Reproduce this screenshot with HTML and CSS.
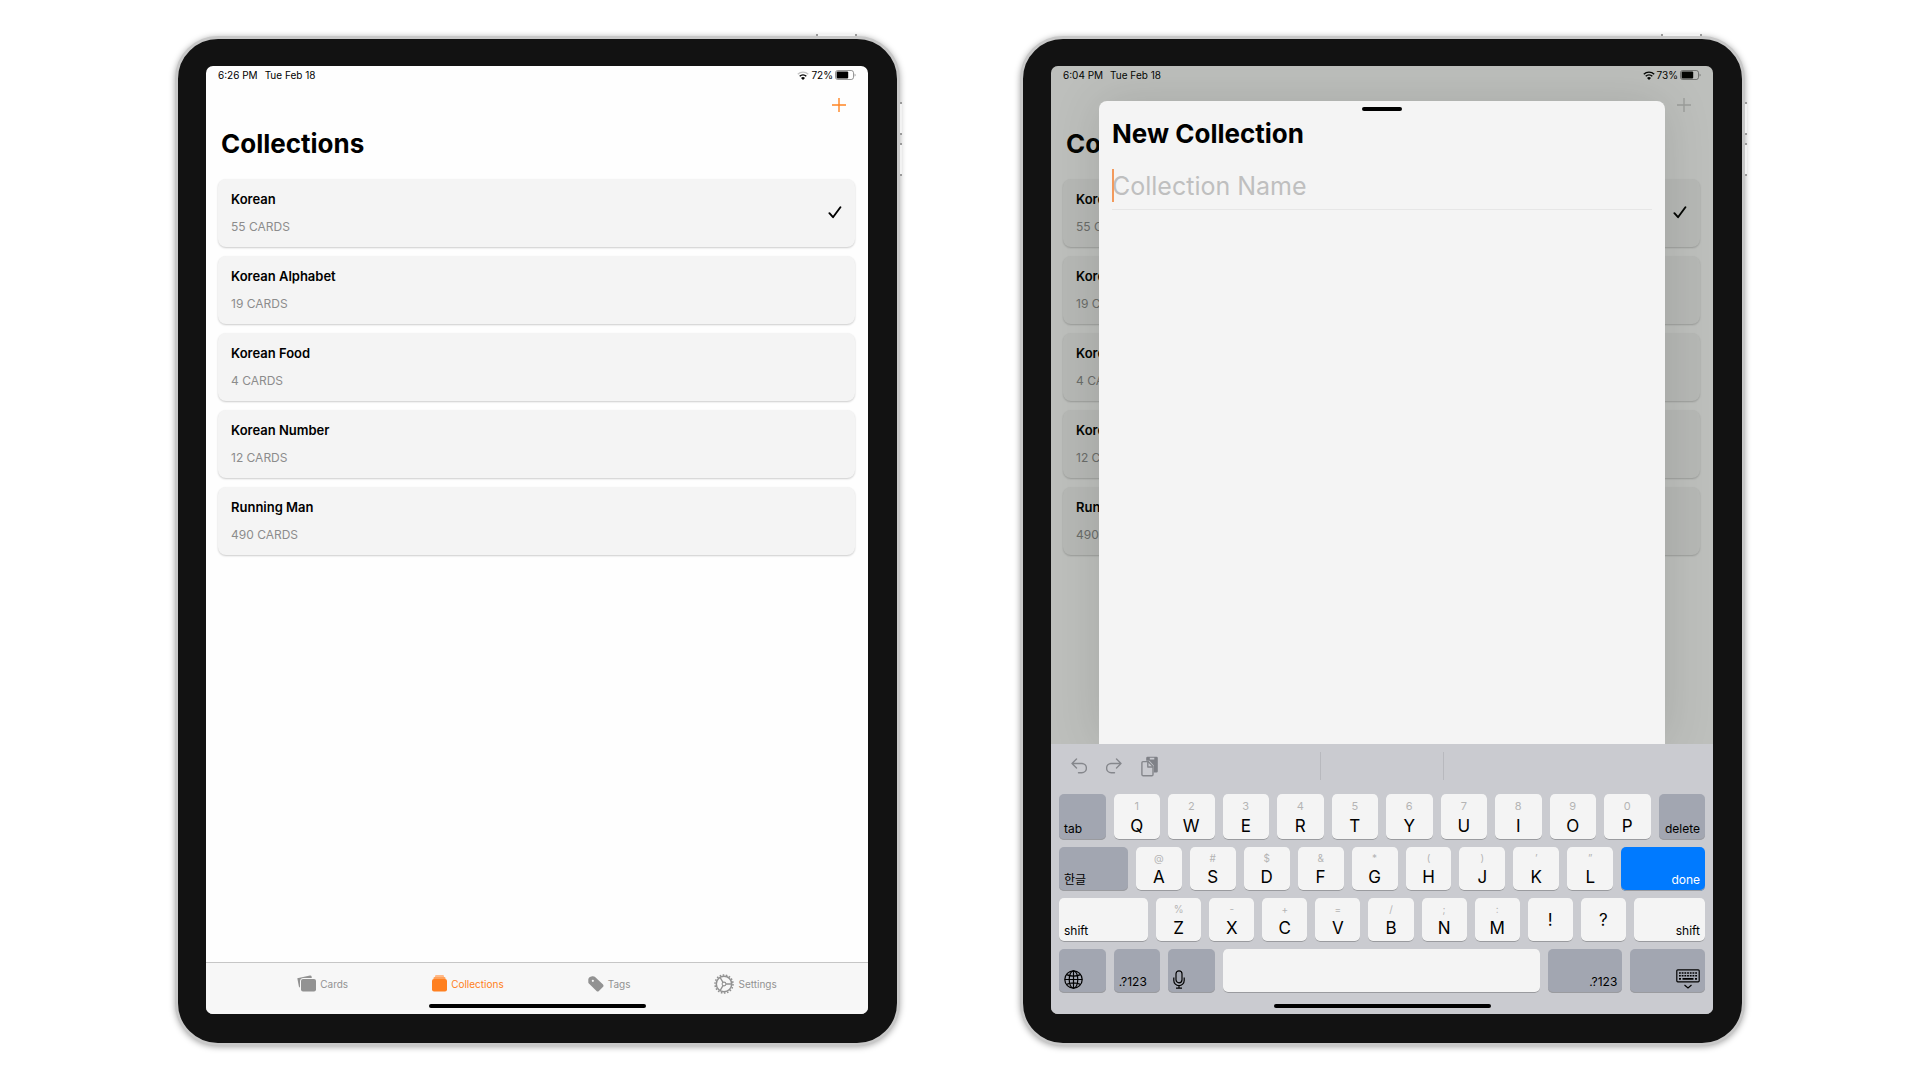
FILE: index.html
```html
<!DOCTYPE html>
<html lang="en">
<head>
<meta charset="utf-8">
<meta name="viewport" content="width=device-width, initial-scale=1">
<title>Collections</title>
<link rel="stylesheet" href="styles.css">
</head>
<body>
<svg class="sprite" aria-hidden="true">
  <symbol id="wifi" viewBox="0 0 12 9"><path d="M.8 3.3a7.4 7.4 0 0 1 10.4 0M2.7 5.3a4.7 4.7 0 0 1 6.6 0" fill="none" stroke="currentColor" stroke-width="1.4"/><path d="M6 8.9 4 6.9a2.9 2.9 0 0 1 4 0z" fill="currentColor"/></symbol>
  <symbol id="wifi-weak" viewBox="0 0 12 9"><path d="M.8 3.3a7.4 7.4 0 0 1 10.4 0" fill="none" stroke="#c4c4c4" stroke-width="1.4"/><path d="M2.7 5.3a4.7 4.7 0 0 1 6.6 0" fill="none" stroke="currentColor" stroke-width="1.4"/><path d="M6 8.9 4 6.9a2.9 2.9 0 0 1 4 0z" fill="currentColor"/></symbol>
  <symbol id="battery" viewBox="0 0 21 10"><rect x=".5" y=".5" width="18" height="9" rx="2.2" fill="none" stroke="currentColor" stroke-opacity=".4"/><rect x="1.6" y="1.6" width="11.6" height="6.8" rx="1" fill="currentColor"/><path d="M19.6 3.4c1.3.5 1.3 2.7 0 3.2z" fill="currentColor" fill-opacity=".45"/></symbol>
  <symbol id="plus" viewBox="0 0 14 14"><path d="M7 0v14M0 7h14" stroke="currentColor" stroke-width="1.4"/></symbol>
  <symbol id="check" viewBox="0 0 14 13"><path d="M1.4 7.2 5 11.2 12.4 1.2" fill="none" stroke="currentColor" stroke-width="1.9" stroke-linecap="round" stroke-linejoin="round"/></symbol>
</svg>

<main class="stage">
  <section class="device" aria-label="Collections list">
    <span class="side side-top"></span><span class="side side-up"></span><span class="side side-down"></span>
    <div class="screen">
      <header class="status">
        <span>6:26 PM</span><span>Tue Feb 18</span>
        <span class="power"><svg class="wifi"><use href="#wifi-weak"/></svg><span>72%</span><svg class="battery"><use href="#battery"/></svg></span>
      </header>
      <div class="toolbar"><button class="add" aria-label="Add collection"><svg><use href="#plus"/></svg></button></div>
      <h1>Collections</h1>
      <ul class="cards">
        <li><button class="card"><span class="text"><strong>Korean</strong><span class="count">55 CARDS</span></span><svg class="check"><use href="#check"/></svg></button></li>
        <li><button class="card"><span class="text"><strong>Korean Alphabet</strong><span class="count">19 CARDS</span></span></button></li>
        <li><button class="card"><span class="text"><strong>Korean Food</strong><span class="count">4 CARDS</span></span></button></li>
        <li><button class="card"><span class="text"><strong>Korean Number</strong><span class="count">12 CARDS</span></span></button></li>
        <li><button class="card"><span class="text"><strong>Running Man</strong><span class="count">490 CARDS</span></span></button></li>
      </ul>
      <nav class="tabs">
        <a href="#cards"><svg width="19" height="17" viewBox="0 0 19 17"><path d="M.3 3.2 13 .6a1.4 1.4 0 0 1 1.6 1L14.800 3H6.500A3.500 3.500 0 0 0 3 6.500v6.300L1.900 11.600z" fill="currentColor"/><rect x="4" y="4" width="15" height="12.500" rx="2" fill="currentColor"/></svg><span>Cards</span></a>
        <a class="on" href="#collections"><svg width="15" height="17" viewBox="0 0 15 17"><rect x="3" y="0" width="9" height="4" rx="1.300" fill="#ffb987"/><rect x="1.500" y="2" width="12" height="3" rx="1.200" fill="#ffa25c"/><rect y="4" width="15" height="12.500" rx="2" fill="currentColor"/></svg><span>Collections</span></a>
        <a href="#tags"><svg width="16" height="16" viewBox="0 0 16 16"><path fill-rule="evenodd" d="M.3 3.200A3 3 0 0 1 1.800 1L4.200.3a3 3 0 0 1 2.600.5l8 7.400a2 2 0 0 1 .1 2.800l-4 4a1.700 1.700 0 0 1-2.400 0L.9 7.600A2 2 0 0 1 .3 6zM4.800 3.700a1.100 1.100 0 1 0 .1 2.200 1.100 1.100 0 0 0-.1-2.200z" fill="currentColor"/></svg><span>Tags</span></a>
        <a href="#settings"><svg width="20" height="20" viewBox="0 0 20 20" fill="none" stroke="currentColor"><circle cx="10" cy="10" r="9" stroke-width="1.600" stroke-dasharray="1.570 1.570"/><circle cx="10" cy="10" r="7.700" stroke-width="1.500"/><circle cx="10" cy="10" r="1.900" stroke-width="1.100"/><path d="M12 10h5.500M9 8.300 6.200 3.600M9 11.700l-2.800 4.700" stroke-width="1.300"/></svg><span>Settings</span></a>
      </nav>
      <span class="home"></span>
    </div>
  </section>

  <section class="device" aria-label="New collection">
    <span class="side side-top"></span><span class="side side-up"></span><span class="side side-down"></span>
    <div class="screen">
      <header class="status">
        <span>6:04 PM</span><span>Tue Feb 18</span>
        <span class="power"><svg class="wifi"><use href="#wifi"/></svg><span>73%</span><svg class="battery"><use href="#battery"/></svg></span>
      </header>
      <div class="toolbar"><button class="add muted" aria-label="Add collection"><svg><use href="#plus"/></svg></button></div>
      <h1>Collections</h1>
      <ul class="cards">
        <li><button class="card"><span class="text"><strong>Korean</strong><span class="count">55 CARDS</span></span><svg class="check"><use href="#check"/></svg></button></li>
        <li><button class="card"><span class="text"><strong>Korean Alphabet</strong><span class="count">19 CARDS</span></span></button></li>
        <li><button class="card"><span class="text"><strong>Korean Food</strong><span class="count">4 CARDS</span></span></button></li>
        <li><button class="card"><span class="text"><strong>Korean Number</strong><span class="count">12 CARDS</span></span></button></li>
        <li><button class="card"><span class="text"><strong>Running Man</strong><span class="count">490 CARDS</span></span></button></li>
      </ul>
      <div class="dim"></div>
      <div class="sheet" role="dialog" aria-labelledby="sheet-title">
        <span class="grab"></span>
        <h2 id="sheet-title">New Collection</h2>
        <div class="field"><input type="text" placeholder="Collection Name" aria-label="Collection Name"><span class="caret"></span></div>
      </div>
      <div class="keyboard">
        <div class="shortcuts">
          <div class="edit">
            <button aria-label="Undo"><svg width="16" height="16" viewBox="0 0 16 16"><path d="M5.500 1 1 5.500 5.500 10M1 5.500h9.800a4.600 4.600 0 0 1 0 9.200H7.500"/></svg></button>
            <button aria-label="Redo"><svg width="16" height="16" viewBox="0 0 16 16"><path d="M10.500 1 15 5.500 10.500 10M15 5.500H5.200a4.600 4.600 0 0 0 0 9.200h3.300"/></svg></button>
            <button aria-label="Paste"><svg width="17" height="21" viewBox="0 0 17 21"><path fill="#7f8187" stroke="none" fill-rule="evenodd" d="M6.500.8h9a1.300 1.300 0 0 1 1.300 1.300v13.200a1.300 1.300 0 0 1-1.300 1.300h-2.700V9.400L8.500 4.800H5.200V2A1.300 1.300 0 0 1 6.500.8zM8.800 1.700v1.800h4.500V1.700z"/><path d="M2 5.600h5.200l4.800 5v8a1.200 1.200 0 0 1-1.200 1.200H2A1.200 1.200 0 0 1 .9 18.600V6.800A1.200 1.200 0 0 1 2 5.600zM6.800 5.800v5.200h5"/></svg></button>
          </div>
          <span class="hint"></span><span></span>
        </div>
        <div class="row tall">
          <button class="key mod">tab</button>
          <button class="key"><small>1</small>Q</button><button class="key"><small>2</small>W</button><button class="key"><small>3</small>E</button><button class="key"><small>4</small>R</button><button class="key"><small>5</small>T</button><button class="key"><small>6</small>Y</button><button class="key"><small>7</small>U</button><button class="key"><small>8</small>I</button><button class="key"><small>9</small>O</button><button class="key"><small>0</small>P</button>
          <button class="key mod end">delete</button>
        </div>
        <div class="row second">
          <button class="key mod lang">한글</button>
          <button class="key"><small>@</small>A</button><button class="key"><small>#</small>S</button><button class="key"><small>$</small>D</button><button class="key"><small>&amp;</small>F</button><button class="key"><small>*</small>G</button><button class="key"><small>(</small>H</button><button class="key"><small>)</small>J</button><button class="key"><small>’</small>K</button><button class="key"><small>”</small>L</button>
          <button class="key mod end done">done</button>
        </div>
        <div class="row third">
          <button class="key mod light">shift</button>
          <button class="key"><small>%</small>Z</button><button class="key"><small>-</small>X</button><button class="key"><small>+</small>C</button><button class="key"><small>=</small>V</button><button class="key"><small>/</small>B</button><button class="key"><small>;</small>N</button><button class="key"><small>:</small>M</button><button class="key solo">!</button><button class="key solo">?</button>
          <button class="key mod light end">shift</button>
        </div>
        <div class="row fourth">
          <button class="key mod" aria-label="Next keyboard"><svg width="19" height="19" viewBox="0 0 19 19"><circle cx="9.500" cy="9.500" r="8.700"/><ellipse cx="9.500" cy="9.500" rx="4.300" ry="8.700"/><path d="M9.500.8v17.400M.8 9.500h17.400M2.500 4.600c4.200 1.800 9.800 1.800 14 0M2.500 14.400c4.200-1.800 9.800-1.800 14 0"/></svg></button>
          <button class="key mod">.?123</button>
          <button class="key mod" aria-label="Dictate"><svg width="12" height="19" viewBox="0 0 12 19"><rect x="3" y=".8" width="6" height="12" rx="3"/><path d="M.8 7.500v3a5.200 5.200 0 0 0 10.400 0v-3M6 15.700v2.500M3 18.200h6"/></svg></button>
          <button class="key space" aria-label="Space"></button>
          <button class="key mod end">.?123</button>
          <button class="key mod end" aria-label="Hide keyboard"><svg width="24" height="20" viewBox="0 0 24 20"><rect x=".8" y=".8" width="22.400" height="12" rx="1"/><path d="M3 4h18M3 6.800h18" stroke-width="1.600" stroke-dasharray="1.800 .9"/><path d="M3 9.800h2M6.500 9.800h11M19 9.800h2" stroke-width="1.700"/><path d="m8.500 16 3.500 3 3.500-3"/></svg></button>
        </div>
      </div>
      <span class="home"></span>
    </div>
  </section>
</main>
</body>
</html>
```
FILE: styles.css
```css
*, *::before, *::after { box-sizing: border-box; }

body {
  margin: 0;
  background: #fff;
  color: #000;
  font-family: Inter, "Noto Sans CJK KR", sans-serif;
}

h1, h2, ul { margin: 0; padding: 0; }
ul { list-style: none; }
a { color: inherit; text-decoration: none; }
button, input { margin: 0; padding: 0; border: 0; background: none; color: inherit; font: inherit; }
svg { display: block; flex: none; }
.sprite { position: absolute; width: 0; height: 0; }

.stage {
  display: grid;
  grid-template-columns: 1fr 1fr;
  gap: 120px;
  min-height: 100vh;
  padding: 36px 175px 34px;
}

/* Tablet frame */
.device {
  position: relative;
  display: flex;
  padding: 27px 29px 29px 28px;
  border: 3px solid #c8c8c8;
  border-radius: 43px;
  background: #121212;
  box-shadow: 0 1px 6px rgba(0, 0, 0, .35);
}
.side { position: absolute; border: 0 solid #999; background: #f2f2f2; }
.side-top { top: -5px; right: 40px; width: 41px; height: 2px; border-width: 0 2px; }
.side-up, .side-down { right: -5px; width: 2px; height: 33px; border-width: 2px 0; }
.side-up { top: 63px; }
.side-down { top: 104px; }

.screen {
  position: relative;
  display: flex;
  flex: 1;
  flex-direction: column;
  overflow: hidden;
  border-radius: 7px;
  background: #fefefe;
}
.home {
  position: absolute;
  bottom: 6px;
  left: 50%;
  width: 217px;
  height: 4px;
  margin-left: -108px;
  border-radius: 2px;
  background: #000;
}

.status {
  display: flex;
  align-items: center;
  gap: 7px;
  height: 20px;
  padding: 0 12px 2px;
  font-size: 10px;
}
.power { display: flex; align-items: center; gap: 2px; margin-left: auto; }
.wifi { width: 12px; height: 9px; }
.battery { width: 21px; height: 10px; }

.toolbar { display: flex; justify-content: flex-end; padding: 12px 22px; }
.add { color: #ff8523; }
.add svg { width: 14px; height: 14px; }
.muted { color: #cfcfcf; }

h1, h2 { font-size: 26px; font-weight: 700; line-height: 32px; }
h1 { padding: 4px 15px 19px; }

.cards { display: grid; gap: 9px; padding: 0 13px 0 12px; }
.card {
  display: flex;
  align-items: center;
  justify-content: space-between;
  width: 100%;
  height: 68px;
  padding: 0 13px 1px;
  border-radius: 8px;
  background: #f4f4f4;
  box-shadow: 0 1px 2px rgba(0, 0, 0, .2);
  text-align: left;
}
.text { display: grid; gap: 12px; font-size: 13px; line-height: 16px; }
.text strong { font-weight: 600; }
.text .count { color: #8c8c8c; font-size: 12px; }
.check { width: 14px; height: 13px; }

.tabs {
  display: flex;
  justify-content: center;
  gap: 84px;
  height: 52px;
  margin-top: auto;
  padding-bottom: 10px;
  border-top: 1px solid #c6c6c6;
  background: #f7f7f7;
  color: #929292;
  font-size: 10px;
}
.tabs a { display: flex; align-items: center; gap: 4px; }
.tabs .on { color: #ff8020; }

/* New collection sheet */
.dim { position: absolute; inset: 0; background: rgba(14, 22, 12, .27); }
.sheet {
  position: absolute;
  inset: 35px 48px 270px;
  padding: 17px 13px;
  border-radius: 8px 8px 0 0;
  background: #f4f4f4;
  box-shadow: 0 0 50px rgba(0, 0, 0, .12);
}
.grab {
  position: absolute;
  top: 6px;
  left: 50%;
  width: 40px;
  height: 4px;
  margin-left: -20px;
  border-radius: 2px;
  background: #000;
}
.field { position: relative; margin-top: 13px; border-bottom: 1px solid #e6e6e6; }
.field input { display: block; width: 100%; height: 46px; outline: 0; font-size: 25px; }
.field input::placeholder { color: #bfbfbf; opacity: 1; }
.caret { position: absolute; top: 6px; left: 0; width: 2px; height: 33px; background: #f39a5c; }

/* Keyboard */
.keyboard {
  position: absolute;
  right: 0;
  bottom: 0;
  left: 0;
  display: grid;
  gap: 7px;
  padding: 0 8px 21px;
  background: #cacbd0;
}
.shortcuts { display: grid; grid-template-columns: 261px 124px 1fr; height: 43px; padding-top: 8px; }
.edit { display: flex; align-items: center; gap: 19px; padding-left: 12px; height: 28px; }
.edit svg { fill: none; stroke: #85878c; stroke-width: 1.4; stroke-linejoin: round; stroke-linecap: round; }
.hint { height: 28px; border: solid #b8b9be; border-width: 0 1px; }

.row { display: flex; gap: 8px; height: 44px; }
.tall { height: 46px; }
.key {
  display: flex;
  flex: 1 1 46px;
  flex-direction: column;
  align-items: center;
  justify-content: flex-end;
  min-width: 0;
  padding-bottom: 4px;
  border-radius: 5px;
  background: #f4f4f4;
  box-shadow: inset 0 -1px #9a9b9f;
  font-size: 17px;
  line-height: 20px;
}
.key small { color: #b4b4b4; font-size: 10px; line-height: 18px; }
.tall small { font-size: 11px; line-height: 20px; }
.solo { justify-content: center; padding-bottom: 0; }
.mod {
  align-items: flex-start;
  padding: 0 5px 3px;
  background: #a2a6b1;
  font-size: 12px;
  line-height: 16px;
}
.mod svg { margin-bottom: 1px; fill: none; stroke: #000; stroke-width: 1.2; }
.end { align-items: flex-end; }
.light { background: #f4f4f4; }
.lang { flex-basis: 69px; }
.done { flex-basis: 84px; background: #007aff; color: #fff; }
.third .key { flex-basis: 45px; }
.third .light { flex-basis: 89px; }
.third .end { flex-basis: 71px; }
.fourth .end { flex-basis: 74px; }
.fourth .space { flex-basis: 316px; }
```
